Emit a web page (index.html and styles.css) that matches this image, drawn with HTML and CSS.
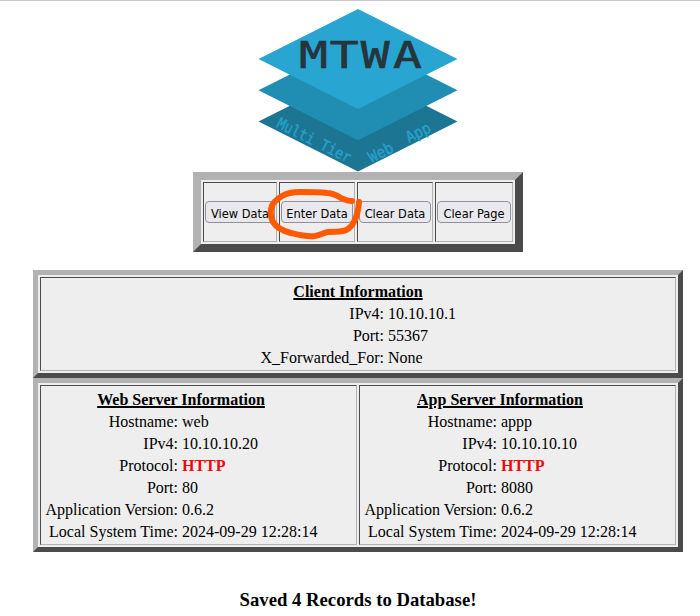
FILE: index.html
```
<!DOCTYPE html>
<html lang="en">
<head>
<meta charset="utf-8">
<title>MTWA</title>
<link rel="stylesheet" href="styles.css">
</head>
<body>
<main class="page">
  <svg class="logo" width="200" height="163" viewBox="0 0 200 163" role="img" aria-label="Multi Tier Web App">
    <path fill="#1c7592" d="M100 62.500L199.500 112.500L100 162.500L.5 112.500Z"/>
    <path fill="#208db3" d="M100 31.300L199.500 81.300L100 131.300L.5 81.300Z"/>
    <path fill="#28a5d1" d="M100 0L199.500 50L100 100L.5 50Z"/>
    <text class="logo-name" transform="translate(0.700 58.700) scale(1.28 1)" x="31.400 55.600 79.800 104.900">MTWA</text>
    <text class="logo-sub" transform="translate(17.500 118) rotate(26.500)" textLength="81" lengthAdjust="spacingAndGlyphs">Multi Tier</text>
    <text class="logo-sub" transform="translate(113.500 154) rotate(-27)" textLength="26" lengthAdjust="spacingAndGlyphs">Web</text>
    <text class="logo-sub" transform="translate(151 134) rotate(-27)" textLength="26" lengthAdjust="spacingAndGlyphs">App</text>
  </svg>

  <nav class="frame toolbar">
    <div class="cell"><button>View Data</button></div>
    <div class="cell"><button>Enter Data</button></div>
    <div class="cell"><button>Clear Data</button></div>
    <div class="cell"><button>Clear Page</button></div>
    <svg class="marker" width="100" height="60" viewBox="0 0 100 60">
      <path d="M87 18C82 18 79 16 76 15C71 12 68 10 62 10C53 9 44 9 35 9C28 9 22 10 17 13C11 17 7 20 6 26C5 32 6 35 8 39C12 45 17 48 26 50C34 52 41 54 50 53C56 52 58 50 63 49C70 48 77 50 83 46C90 41 93 31 94 19"/>
    </svg>
  </nav>

  <section class="frame client">
    <div class="cell">
      <h2>Client Information</h2>
      <dl>
        <dt>IPv4:</dt><dd>10.10.10.1</dd>
        <dt>Port:</dt><dd>55367</dd>
        <dt>X_Forwarded_For:</dt><dd>None</dd>
      </dl>
    </div>
  </section>

  <section class="frame servers">
    <div class="cell">
      <h2>Web Server Information</h2>
      <dl>
        <dt>Hostname:</dt><dd>web</dd>
        <dt>IPv4:</dt><dd>10.10.10.20</dd>
        <dt>Protocol:</dt><dd class="insecure">HTTP</dd>
        <dt>Port:</dt><dd>80</dd>
        <dt>Application Version:</dt><dd>0.6.2</dd>
        <dt>Local System Time:</dt><dd>2024-09-29 12:28:14</dd>
      </dl>
    </div>
    <div class="cell">
      <h2>App Server Information</h2>
      <dl>
        <dt>Hostname:</dt><dd>appp</dd>
        <dt>IPv4:</dt><dd>10.10.10.10</dd>
        <dt>Protocol:</dt><dd class="insecure">HTTP</dd>
        <dt>Port:</dt><dd>8080</dd>
        <dt>Application Version:</dt><dd>0.6.2</dd>
        <dt>Local System Time:</dt><dd>2024-09-29 12:28:14</dd>
      </dl>
    </div>
  </section>

  <h3 class="status">Saved 4 Records to Database!</h3>
</main>
</body>
</html>
```
FILE: styles.css
```
* {
  box-sizing: border-box;
}

body {
  margin: 0;
  height: 616px;
  overflow: hidden;
  border-top: 1px solid #c9c9c9;
  background: #fff;
  color: #000;
  font: 16px/22px "Liberation Serif", serif;
}

.page {
  display: flex;
  flex-direction: column;
  align-items: center;
  padding: 8px 0 0 16px;
}

.logo {
  display: block;
  overflow: visible;
}

.logo-name {
  font: 37.5px "DejaVu Sans Mono", monospace;
  fill: #26343b;
  stroke: #26343b;
  stroke-width: 0.6;
}

.logo-sub {
  font: 15.5px "DejaVu Sans Mono", monospace;
  fill: #28a0ca;
  stroke: #28a0ca;
  stroke-width: 0.4;
}

.frame {
  display: grid;
  gap: 2px;
  padding: 2px;
  background: #eee;
  border: 5px solid;
  border-color: #b2b2b2 #4b4b4b #4b4b4b #b2b2b2;
}

.cell {
  border: 1px solid;
  border-color: #4b4b4b #b2b2b2 #b2b2b2 #4b4b4b;
}

.toolbar {
  position: relative;
  width: 330px;
  height: 80px;
  border-width: 8px;
  grid-template-columns: 74px 76px 76px 78px;
}

.toolbar .cell {
  display: flex;
  align-items: center;
  padding: 0 1px;
}

button {
  width: 100%;
  height: 22px;
  padding: 2px 0 0;
  border: 1px solid #8f8f9d;
  border-radius: 4px;
  background: #e9e9ed;
  color: #000;
  font: 12.7px "DejaVu Sans Condensed", "DejaVu Sans", sans-serif;
  font-stretch: condensed;
  white-space: nowrap;
}

.marker {
  position: absolute;
  left: 64px;
  top: 3px;
  fill: none;
  stroke: #ff5a00;
  stroke-width: 6;
  stroke-linecap: round;
  stroke-linejoin: round;
}

.client {
  width: 650px;
  height: 108px;
  margin-top: 18px;
}

.servers {
  width: 650px;
  height: 174px;
  grid-template-columns: 317px 317px;
}

.client .cell,
.servers .cell {
  padding: 3px 3px 0;
}

h2 {
  margin: 0;
  font-size: 16px;
  line-height: 22px;
  text-align: center;
  text-decoration: underline;
  text-decoration-thickness: 2px;
}

.servers h2 {
  padding-right: 35px;
}

dl {
  display: grid;
  grid-template-columns: 134px 1fr;
  column-gap: 4px;
  margin: 0;
}

.client dl {
  grid-template-columns: 340px 1fr;
}

dt {
  text-align: right;
}

dd {
  margin: 0;
}

.insecure {
  color: #e9090f;
  font-weight: bold;
}

.status {
  margin: 37px 0 0;
  font-size: 18.72px;
  line-height: 22px;
}
```
